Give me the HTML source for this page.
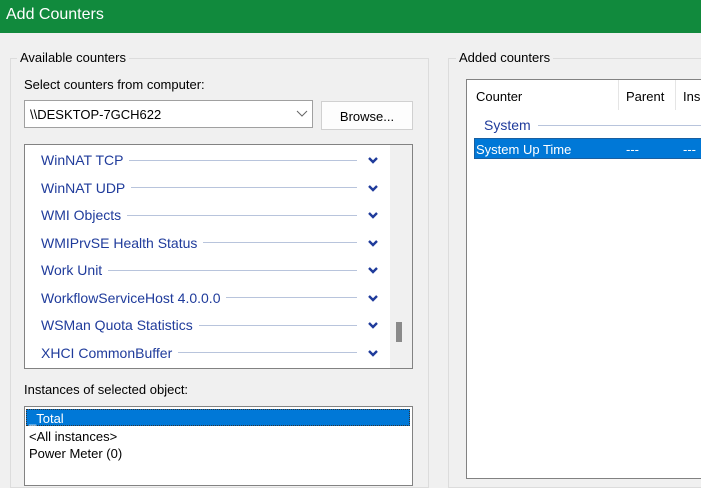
<!DOCTYPE html>
<html><head><style>
*{margin:0;padding:0;box-sizing:border-box}
body{width:701px;height:477px;overflow:hidden;background:#f0f0f0;font-family:"Liberation Sans",sans-serif;font-size:13px;color:#000;position:relative}
.a{position:absolute}
.title{left:0;top:0;width:701px;height:33px;background:#118a3d;color:#fff;font-size:16px;padding:6px 0 0 6px}
.grp{border:1px solid #dcdcdc}
.lbl{background:#f0f0f0;padding:0 3px}
.row{position:absolute;left:41px;width:316px;display:flex;align-items:center;height:18px}
.row span{color:#1f3b9b;font-size:14px;white-space:nowrap}
.row i{flex:1;height:1px;background:#b8c4dc;margin-left:6px}
.line{height:1px;background:#b8c4dc}
.chev{width:12px;height:8px}
</style></head><body>
<div class="a title">Add Counters</div>
<div class="a grp" style="left:10px;top:58px;width:419px;height:430px"></div>
<div class="a lbl" style="left:17px;top:50px">Available counters</div>
<div class="a" style="left:24px;top:77px">Select counters from computer:</div>
<div class="a" style="left:24px;top:100px;width:289px;height:28px;background:#fff;border:1px solid #a0a0a0;padding:6px 0 0 5px">\\DESKTOP-7GCH622</div>
<svg class="a" style="left:296px;top:110px" width="12" height="8"><path d="M1 1 L6 6 L11 1" stroke="#666" fill="none"/></svg>
<div class="a" style="left:321px;top:101px;width:92px;height:29px;background:#fdfdfd;border:1px solid #d0d0d0;text-align:center;padding-top:7px">Browse...</div>
<div class="a" style="left:24px;top:144px;width:389px;height:225px;border:1px solid #828282;background:#f0f0f0"></div>
<div class="a" style="left:25px;top:145px;width:365px;height:223px;background:#fff"></div>
<div class="a" style="left:396px;top:322px;width:6px;height:20px;background:#8a8a8a"></div>
<div id="list"></div>
<div class="a" style="left:24px;top:382px">Instances of selected object:</div>
<div class="a" style="left:24px;top:406px;width:389px;height:80px;border:1px solid #828282;background:#fff"></div>
<div class="a" style="left:26px;top:409px;width:384px;height:17px;background:#0078d7;border:1px dotted #333"></div>
<div class="a" style="left:29px;top:411px;color:#fff">_Total</div>
<div class="a" style="left:29px;top:429px">&lt;All instances&gt;</div>
<div class="a" style="left:29px;top:446px">Power Meter (0)</div>
<div class="a grp" style="left:448px;top:58px;width:300px;height:430px"></div>
<div class="a lbl" style="left:456px;top:50px">Added counters</div>
<div class="a" style="left:466px;top:79px;width:240px;height:400px;border:1px solid #828282;background:#fff"></div>
<div class="a" style="left:618px;top:80px;width:1px;height:30px;background:#e5e5e5"></div>
<div class="a" style="left:675px;top:80px;width:1px;height:30px;background:#e5e5e5"></div>
<div class="a" style="left:476px;top:89px">Counter</div>
<div class="a" style="left:626px;top:89px">Parent</div>
<div class="a" style="left:683px;top:89px">Ins</div>
<div class="a" style="left:484px;top:117px;color:#1f3b9b;font-size:14px">System</div>
<div class="a line" style="left:538px;top:125px;width:170px"></div>
<div class="a" style="left:474px;top:138px;width:230px;height:21px;background:#0078d7;border:1px solid #1a5fa0"></div>
<div class="a" style="left:476px;top:142px;color:#fff">System Up Time</div>
<div class="a" style="left:626px;top:142px;color:#fff">---</div>
<div class="a" style="left:683px;top:142px;color:#fff">---</div>
<script>
var n=["WinNAT TCP","WinNAT UDP","WMI Objects","WMIPrvSE Health Status","Work Unit","WorkflowServiceHost 4.0.0.0","WSMan Quota Statistics","XHCI CommonBuffer"];
var h="";
for(var i=0;i<n.length;i++){var y=151+i*27.5;
h+='<div class="row" style="top:'+y+'px"><span>'+n[i]+'</span><i></i></div>';
h+='<svg class="a chev" style="left:367px;top:'+(y+5)+'px" viewBox="0 0 12 8"><path d="M2 2 L6 6 L10 2" stroke="#1f3b9b" stroke-width="2.4" fill="none"/></svg>';}
document.getElementById("list").innerHTML=h;
</script>
</body></html>
